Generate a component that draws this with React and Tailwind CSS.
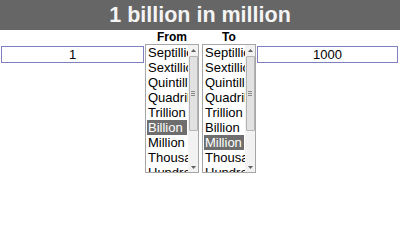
import React from 'react';

const units = ['Septillion', 'Sextillion', 'Quintillion', 'Quadrillion', 'Trillion', 'Billion', 'Million', 'Thousand', 'Hundred'];

const Arrow = ({ down }) => (
    <svg width="5" height="3" viewBox="0 0 5 3" className="block">
        <path d={down ? 'M0 0 L5 0 L2.5 3 Z' : 'M0 3 L5 3 L2.5 0 Z'} fill="#606060" />
    </svg>
);

const ListBox = ({ selected }) => (
    <div className="flex w-[54px] h-[129px] border border-[#a6a6a6] bg-white overflow-hidden">
        <div className="flex-1 overflow-hidden pl-[1px] text-[13px] leading-[15px] text-black">
            {units.map((u) => (
                <div
                    key={u}
                    className={`whitespace-nowrap pl-[1px] mr-[1px] ${u === selected ? 'bg-[#6e6e6e] text-white' : ''}`}
                >
                    {u}
                </div>
            ))}
        </div>
        {/* fake scrollbar */}
        <div className="w-[10px] bg-[#f2f2f2] flex flex-col items-center">
            <div className="h-[10px] flex items-center justify-center"><Arrow /></div>
            <div className="mt-[1px] h-[75px] w-[9px] bg-[#e2e2e2] border border-[#b4b4b4] rounded-[1px] flex items-center justify-center">
                <div className="flex flex-col gap-[1px]">
                    <div className="w-[4px] h-[1px] bg-[#8a8a8a]" />
                    <div className="w-[4px] h-[1px] bg-[#8a8a8a]" />
                    <div className="w-[4px] h-[1px] bg-[#8a8a8a]" />
                </div>
            </div>
            <div className="flex-1" />
            <div className="h-[10px] flex items-center justify-center"><Arrow down /></div>
        </div>
    </div>
);

const App = () => {
    return (
        <div className="w-[400px] h-[250px] bg-white" style={{ fontFamily: '"Liberation Sans", Arial, sans-serif' }}>
            <div className="h-[30px] bg-[#666666] text-[#f4f4f4] text-[21.5px] font-bold leading-[30px] text-center">
                1 billion in million
            </div>

            <div className="flex items-start pl-[1px]">
                <div className="w-[143px] h-[17px] mt-[16px] border border-[#8080c0] text-[13px] leading-[15px] text-center text-black">1</div>

                <div className="ml-[1px] flex flex-col items-center">
                    <div className="text-[12px] leading-[14px] font-bold text-black">From</div>
                    <ListBox selected="Billion" />
                </div>

                <div className="ml-[3px] flex flex-col items-center">
                    <div className="text-[12px] leading-[14px] font-bold text-black">To</div>
                    <ListBox selected="Million" />
                </div>

                <div className="ml-[1px] w-[141px] h-[17px] mt-[16px] border border-[#8080c0] text-[13px] leading-[15px] text-center text-black">1000</div>
            </div>
        </div>
    );
};

export default App;
